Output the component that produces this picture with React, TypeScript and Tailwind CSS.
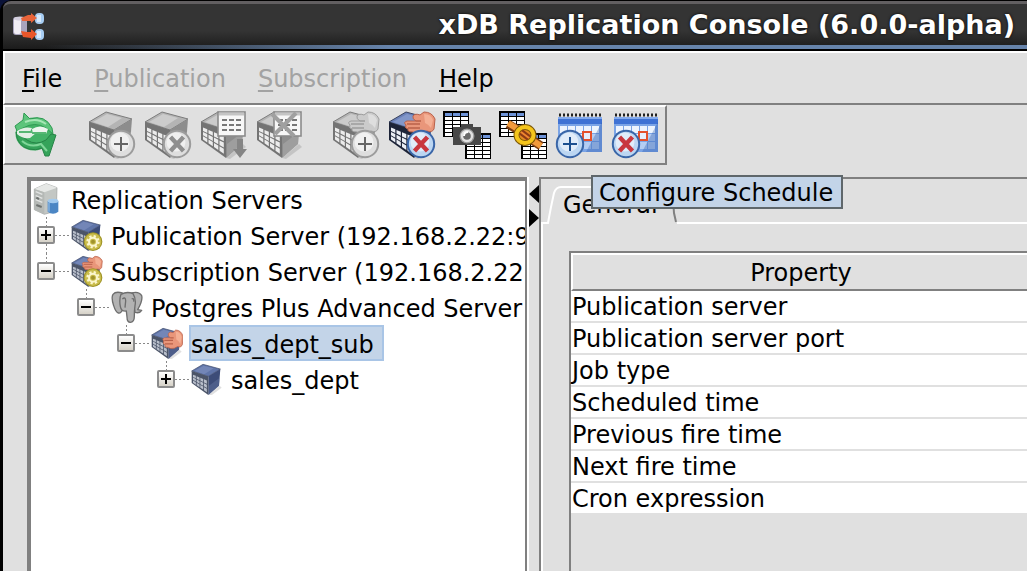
import { Fragment, type ReactNode } from "react";

type Tone = "gray" | "blue" | "slate";

const GRID = [0, 1, 2, 3];

/* A point on the front face of the cube, u to the right and v downward, both 0..1. */
function facePoint(u: number, v: number) {
  const top = 12 + 8 * u;
  const bottom = 30 + 18 * u;
  return `${(1 + 25 * u).toFixed(1)},${(top + (bottom - top) * v).toFixed(1)}`;
}

const cubeColors = {
  gray: { top: "#b4b4b4", hi: "#dcdcdc", front: "#747474", side: "#8d8d8d", low: "#b0b0b0", cell: "#ececec", edge: "#7c7c7c" },
  blue: { top: "#6a80b8", hi: "#93a6d4", front: "#1d2438", side: "#3d4f7d", low: "#6f83ad", cell: "#eceff5", edge: "#39435f" },
  slate: { top: "#5f74a8", hi: "#8093c2", front: "#4b5468", side: "#3c4c78", low: "#5d6f9b", cell: "#b9bfcb", edge: "#3f4a68" },
};

function Cube({ tone }: { tone: Tone }) {
  const c = cubeColors[tone];
  return (
    <g>
      <path d="M26 48 43 34 46 37 30 49Z" fill="#000" opacity=".12" />
      <path d="M1 12 18 2 44 9 26 20Z" fill={c.top} stroke={c.edge} strokeWidth="1" />
      <path d="M5 12 19 4 34 8 20 17Z" fill={c.hi} opacity=".6" />
      <path d="M26 20 44 9 42 34 26 48Z" fill={c.side} />
      <path d="M27 34 43 22 42 34 27 47Z" fill={c.low} opacity=".5" />
      <path d="M1 12 26 20V48L1 30Z" fill={c.front} />
      {GRID.map((col) =>
        GRID.slice(0, 3).map((row) => {
          const u = 0.08 + col * 0.22;
          const v = 0.26 + row * 0.23;
          return (
            <polygon
              key={`${col}-${row}`}
              points={[
                facePoint(u, v),
                facePoint(u + 0.17, v),
                facePoint(u + 0.17, v + 0.18),
                facePoint(u, v + 0.18),
              ].join(" ")}
              fill={c.cell}
            />
          );
        }),
      )}
    </g>
  );
}

function Badge({ cx, cy, tone, kind }: { cx: number; cy: number; tone: Tone; kind: "plus" | "cross" }) {
  const gray = tone === "gray";
  const mark = kind === "plus" ? (gray ? "#666" : "#1c4f8f") : gray ? "#8f8f8f" : "#c8373f";
  return (
    <g transform={`translate(${cx} ${cy})`}>
      <circle r="13.2" fill={gray ? "#dedede" : "#bcd6f2"} stroke={gray ? "#9c9c9c" : "#3a66a8"} strokeWidth="2" />
      <circle cx="-1" cy="-2" r="9.5" fill="#fff" opacity=".55" />
      {kind === "plus" ? (
        <path d="M-7 0H7M0-7V7" stroke={mark} strokeWidth="2" />
      ) : (
        <path d="M-6.5-7 6.5 7M6.5-7-6.5 7" stroke={mark} strokeWidth="4.4" />
      )}
    </g>
  );
}

function Hand({ tone }: { tone: Tone }) {
  const gray = tone === "gray";
  const line = gray ? "#9d9d9d" : "#b9614a";
  return (
    <g>
      <path
        d="M25 6Q27 3 32 5L36 2Q44 2 47 9L46 19Q44 23 39 21L34 23Q27 24 25 22Q19 22 20 19Q16 18 18 15Q15 12 19 11L28 11Q24 9 25 6Z"
        fill={gray ? "#cbcbcb" : "#e9967a"}
        stroke={line}
        strokeWidth="1"
      />
      <path d="M19 14H32M20 18H32M28 11H33" stroke={line} strokeWidth="1.4" fill="none" />
      <path d="M36 4Q43 4 45 10L43 18Q40 14 37 13Z" fill={gray ? "#dedede" : "#f4b095"} />
    </g>
  );
}

function Sheet() {
  return (
    <g>
      <rect x="18" y="2" width="27" height="24" fill="#f7f7f7" stroke="#8b8b8b" strokeWidth="1.6" />
      <path d="M19 4H44" stroke="#c4c4c4" strokeWidth="3" />
      <path d="M22 10H41M22 15H41M22 20H41" stroke="#777" strokeWidth="1.8" strokeDasharray="5 2" />
    </g>
  );
}

function MiniTable({ x, y }: { x: number; y: number }) {
  return (
    <g transform={`translate(${x} ${y})`}>
      <path d="M0 0H26V26H0Z" fill="#000" />
      {[1, 9, 17].map((cx) => (
        <Fragment key={cx}>
          <rect x={cx + 1} y="2" width="7" height="3" fill="#6d93d8" />
          {[6, 10, 14, 18, 22].map((cy) => (
            <rect key={cy} x={cx + 1} y={cy} width="7" height="3" fill="#fff" />
          ))}
        </Fragment>
      ))}
    </g>
  );
}

function Calendar() {
  return (
    <g>
      <rect x="2" y="8" width="44" height="34" fill="#7ba4e6" />
      <rect x="2" y="8" width="44" height="6" fill="#3f72d4" />
      <path d="M2 8H46" stroke="#83abef" strokeWidth="2" />
      <path d="M3 5H46" stroke="#222" strokeWidth="3" strokeDasharray="2 2" />
      {[4, 12, 20, 28, 36].map((x, i) =>
        [16, 24, 32].map((y, j) => (
          <rect key={`${x}-${y}`} x={x} y={y} width="7" height="7" fill={i + j > 4 ? "#b4cdf3" : "#edf4fe"} />
        )),
      )}
      <path d="M46 12V42H30Z" fill="#2d5ca8" opacity=".35" />
      <rect x="27" y="22" width="8" height="8" fill="#e7eefc" stroke="#e4502d" strokeWidth="2" />
    </g>
  );
}

function Gear() {
  return (
    <g>
      <circle cx="33" cy="34" r="14" fill="#9c9123" />
      <circle cx="33" cy="34" r="12.5" fill="#cabd4c" />
      <circle cx="33" cy="34" r="8" fill="none" stroke="#fbf6cd" strokeWidth="4" strokeDasharray="3.2 3.08" />
      <circle cx="33" cy="34" r="6" fill="none" stroke="#fbf6cd" strokeWidth="3" />
      <circle cx="33" cy="34" r="3" fill="#a0932c" />
    </g>
  );
}

function Icon({ className, children }: { className: string; children: ReactNode }) {
  return (
    <svg viewBox="0 0 48 48" className={className} aria-hidden="true">
      {children}
    </svg>
  );
}

function RefreshGlyph() {
  return (
    <g>
      <ellipse cx="22" cy="24" rx="18.5" ry="16.5" fill="#43b267" />
      <path d="M11 10 12 3 18 9Q33 4 40 18L41 24 34 18Q23 11 11 18L5 21 3 16Z" fill="#5cc47b" stroke="#2f9a52" strokeWidth="1" />
      <path d="M4 22Q5 36 17 39Q24 41 30 38L33 46 37 46 44 25 39 24 34 30Q24 36 15 30L7 24Z" fill="#35a35a" stroke="#278447" strokeWidth="1" />
      <path d="M5 21Q12 16 20 18L18 22 24 23 18 28Q10 29 5 24Z" fill="#e2efe5" />
      <path d="M20 19Q28 14 36 19L34 24 21 24Z" fill="#edf6ef" />
      <path d="M7 22H20M20 23H34" stroke="#57b774" strokeWidth="2" />
      <path d="M13 12Q25 7 34 14" stroke="#a6e6b5" strokeWidth="2" fill="none" />
      <path d="M10 31Q18 38 29 34L35 41" stroke="#7fd698" strokeWidth="2" fill="none" />
    </g>
  );
}

function AppGlyph() {
  return (
    <svg viewBox="0 0 32 28" className="h-7 w-8" aria-hidden="true">
      <rect x="0" y="4" width="14" height="18" rx="3" fill="#a9a4bd" />
      <rect x="1" y="5" width="7" height="16" rx="2" fill="#f1edf4" />
      <ellipse cx="7" cy="5.5" rx="6" ry="2" fill="#d4d0df" />
      <rect x="22" y="0" width="9" height="11" rx="4" fill="#a7cdf3" />
      <rect x="22" y="16" width="9" height="11" rx="4" fill="#a7cdf3" />
      <path d="M26 2V9M26 18V25" stroke="#d6e9fc" strokeWidth="4" />
      <path d="M8 5 15 2H18V0L24 5 18 10V8L9 8Z" fill="#e8643a" />
      <path d="M8 18 14 19H18V16L24 21 18 27V25L10 24Z" fill="#e8562a" />
    </svg>
  );
}

function ServerGlyph() {
  return (
    <g>
      <path d="M5 9 23 1 39 7 38 42 20 47 5 40Z" fill="#c3c7c4" stroke="#9b9f9d" strokeWidth="1" />
      <path d="M5 9 23 1 39 7 20 14Z" fill="#e6e8e6" />
      <path d="M5 9 20 14V47L5 40Z" fill="#b5b9b6" />
      <path d="M7 19 17 23M7 25 17 29M7 13 17 17" stroke="#e3e5e4" strokeWidth="2" />
      <path d="M8 33 16 36M8 22 12 24" stroke="#6f7371" strokeWidth="3" />
      <path d="M25 27H41V43Q33 49 25 43Z" fill="#4b86c4" />
      <ellipse cx="33" cy="27" rx="8" ry="3.4" fill="#a2caee" />
      <path d="M27 30V43" stroke="#8cb8e4" strokeWidth="2" />
    </g>
  );
}

function ElephantGlyph() {
  return (
    <g fill="#b3b3b3" stroke="#6e6e6e" strokeWidth="2" strokeLinejoin="round">
      <path d="M31 3Q42 0 46 7Q48 14 40 28L46 29Q43 34 36 32Z" />
      <path d="M17 3Q7 0 3 5Q0 10 4 22Q7 32 11 33Q15 34 18 27Z" />
      <path d="M15 5Q24 0 33 4Q38 12 36 22Q35 29 35 38Q35 47 29 47Q24 47 24 39L23 30Q15 31 14 23Q12 12 15 5Z" />
      <path d="M17 12Q22 8 22 15L21 25M31 12Q35 10 34 16" fill="none" />
    </g>
  );
}

const menus = [
  { name: "File", enabled: true },
  { name: "Publication", enabled: false },
  { name: "Subscription", enabled: false },
  { name: "Help", enabled: true },
];

type Tool = { label: string; art: ReactNode; disabled?: boolean; tip?: boolean };

const toolGroups: Tool[][] = [
  [{ label: "Refresh", art: <RefreshGlyph /> }],
  [
    { label: "Create Publication", disabled: true, art: <><Cube tone="gray" /><Badge cx={33} cy={34} tone="gray" kind="plus" /></> },
    { label: "Remove Publication", disabled: true, art: <><Cube tone="gray" /><Badge cx={33} cy={34} tone="gray" kind="cross" /></> },
    {
      label: "Add Tables",
      disabled: true,
      art: (
        <>
          <Cube tone="gray" />
          <Sheet />
          <path d="M37 29H43V39H47L40 48 33 39H37Z" fill="#858585" />
        </>
      ),
    },
    {
      label: "Remove Tables",
      disabled: true,
      art: (
        <>
          <Cube tone="gray" />
          <Sheet />
          <path d="M16 4 38 26M40 3 19 24" stroke="#a0a0a0" strokeWidth="4" />
        </>
      ),
    },
  ],
  [
    { label: "Create Subscription", disabled: true, art: <><Cube tone="gray" /><Hand tone="gray" /><Badge cx={33} cy={34} tone="gray" kind="plus" /></> },
    { label: "Remove Subscription", art: <><Cube tone="blue" /><Hand tone="blue" /><Badge cx={33} cy={34} tone="blue" kind="cross" /></> },
    {
      label: "Snapshot",
      art: (
        <>
          <MiniTable x={-1} y={1} />
          <MiniTable x={21} y={23} />
          <path d="M9 17H17V14H29V17H37V35H9Z" fill="#484848" />
          <circle cx="23" cy="26" r="7.5" fill="#9a9a9a" />
          <circle cx="23" cy="26" r="5" fill="#6a6a6a" stroke="#e2e2e2" strokeWidth="2.4" />
          <path d="M20 26Q20 22 24 22" stroke="#fff" strokeWidth="2" fill="none" />
        </>
      ),
    },
    {
      label: "Synchronize",
      art: (
        <>
          <MiniTable x={-1} y={1} />
          <MiniTable x={21} y={23} />
          <path d="M8 14 18 20M32 30 41 36" stroke="#7d3d12" strokeWidth="9" />
          <path d="M8 13 19 20M32 30 41 36" stroke="#f29a3c" strokeWidth="6" />
          <ellipse cx="25" cy="25" rx="8.5" ry="8" fill="#e58a22" stroke="#7e5908" strokeWidth="6" />
          <ellipse cx="25" cy="25" rx="8.5" ry="8" fill="none" stroke="#f5c51c" strokeWidth="4" />
          <path d="M21 22 29 28" stroke="#8a3a16" strokeWidth="6" />
          <path d="M21 22 29 28" stroke="#f0862f" strokeWidth="2" />
        </>
      ),
    },
    { label: "Configure Schedule", tip: true, art: <><Calendar /><Badge cx={14} cy={34} tone="blue" kind="plus" /></> },
    { label: "Remove Schedule", art: <><Calendar /><Badge cx={14} cy={34} tone="blue" kind="cross" /></> },
  ],
];

type Node = {
  label: string;
  art: ReactNode;
  open?: boolean;
  selected?: boolean;
  children?: Node[];
};

const tree: Node[] = [
  {
    label: "Publication Server (192.168.2.22:9",
    art: <><Cube tone="slate" /><Gear /></>,
  },
  {
    label: "Subscription Server (192.168.2.22",
    art: <><Cube tone="slate" /><Hand tone="blue" /><Gear /></>,
    open: true,
    children: [
      {
        label: "Postgres Plus Advanced Server",
        art: <ElephantGlyph />,
        open: true,
        children: [
          {
            label: "sales_dept_sub",
            art: <><Cube tone="slate" /><g transform="translate(1 2) scale(1 1.3)"><Hand tone="blue" /></g></>,
            open: true,
            selected: true,
            children: [{ label: "sales_dept", art: <Cube tone="slate" /> }],
          },
        ],
      },
    ],
  },
];

const dotsDown = "bg-[repeating-linear-gradient(to_bottom,#888_0_2px,transparent_2px_4px)]";
const dotsAcross = "bg-[repeating-linear-gradient(to_right,#888_0_2px,transparent_2px_4px)]";

function NodeLabel({ art, label, selected }: { art: ReactNode; label: string; selected?: boolean }) {
  return (
    <>
      <Icon className="size-8 shrink-0">{art}</Icon>
      <span
        className={`ml-1.5 flex h-9 items-center border-2 pt-1 pr-2 ${
          selected ? "border-[#a9c5e6] bg-[#c3d4e8]" : "border-transparent"
        }`}
      >
        {label}
      </span>
    </>
  );
}

function Branch({ nodes }: { nodes: Node[] }) {
  return (
    <ul role="group">
      {nodes.map((node, i) => (
        <li key={node.label} role="treeitem" aria-expanded={!!node.open} aria-selected={!!node.selected}>
          <div className="flex h-9 items-center">
            <div className="ml-1.5 flex h-9 w-[18px] shrink-0 flex-col items-center">
              <span className={`w-px flex-1 ${dotsDown}`} />
              <button
                type="button"
                aria-label={`${node.open ? "Collapse" : "Expand"} ${node.label}`}
                className="flex size-[18px] items-center justify-center rounded-xs border-2 border-[#8c8c8c] bg-linear-to-b from-white to-[#d6d2c8]"
              >
                <svg viewBox="0 0 14 14" className="size-3.5" aria-hidden="true">
                  <path d={node.open ? "M2 7H12" : "M2 7H12M7 2V12"} stroke="#000" strokeWidth="2" />
                </svg>
              </button>
              <span className={`w-px flex-1 ${i < nodes.length - 1 ? dotsDown : ""}`} />
            </div>
            <span className={`h-px w-4 shrink-0 ${dotsAcross}`} />
            <NodeLabel art={node.art} label={node.label} selected={node.selected} />
          </div>
          {node.children && (
            <div className="pl-10">
              <Branch nodes={node.children} />
            </div>
          )}
        </li>
      ))}
    </ul>
  );
}

const properties = [
  "Publication server",
  "Publication server port",
  "Job type",
  "Scheduled time",
  "Previous fire time",
  "Next fire time",
  "Cron expression",
];

export default function App() {
  return (
    <div className="flex min-h-screen flex-col overflow-hidden bg-[#0a1238] font-['DejaVu_Sans',sans-serif] text-2xl leading-7 text-black">
      <header className="flex h-[51px] shrink-0 items-center justify-between rounded-tl-xl border-t border-b-2 border-black bg-black">
        <div className="ml-[3px] flex h-12 flex-1 items-center justify-between rounded-tl-lg border-t-[3px] border-[#625f61] bg-linear-to-b from-[#343434] from-60% to-[#1b1b1b] pl-2.5">
          <AppGlyph />
          <div className="flex h-full flex-1 flex-col">
            <h1 className="flex flex-1 items-center justify-end pr-3 text-[27px] font-bold whitespace-nowrap text-white [text-shadow:0_0_3px_#000]">
              xDB Replication Console (6.0.0-alpha)
            </h1>
            <div className="h-1 bg-linear-to-r from-transparent to-[#6683aa] to-35%" />
          </div>
        </div>
      </header>

      <div className="flex flex-1 flex-col border-l-[3px] border-black bg-[#e0e0e0]">
        <nav aria-label="Main menu" className="flex h-[54px] shrink-0 items-center border-t-2 border-b-2 border-l-2 border-t-white border-b-[#808080] border-l-white pt-0.5 pl-px">
          {menus.map((m) => (
            <button
              key={m.name}
              type="button"
              disabled={!m.enabled}
              className={`px-4 ${m.enabled ? "text-black" : "text-[#a3a3a3]"}`}
            >
              <span className="underline decoration-2 underline-offset-3">{m.name[0]}</span>
              {m.name.slice(1)}
            </button>
          ))}
        </nav>

        <div role="toolbar" aria-label="Tools" className="flex w-fit gap-7 border-2 border-t-white border-r-[#808080] border-b-[#808080] border-l-white pt-[3px] pr-[5px] pb-[5px] pl-[7px]">
          {toolGroups.map((group, g) => (
            <div key={g} className="flex gap-2">
              {group.map((tool) => (
                <div key={tool.label} className="relative">
                  <button type="button" aria-label={tool.label} disabled={tool.disabled} className="block size-12">
                    <Icon className="size-12 overflow-visible">{tool.art}</Icon>
                  </button>
                  {tool.tip && (
                    <div role="tooltip" className="absolute top-[65px] left-[35px] z-10 border-2 border-[#5f676b] bg-[#c3d4e8] pt-0.5 pr-2 pl-1.5 whitespace-nowrap">
                      {tool.label}
                    </div>
                  )}
                </div>
              ))}
            </div>
          ))}
        </div>

        <main className="flex flex-1 pt-3 pl-6">
          <section
            aria-label="Replication tree"
            className="w-[500px] shrink-0 overflow-hidden border-t-4 border-r-2 border-l-4 border-[#808080] bg-white whitespace-nowrap"
          >
            <div className="flex h-9 items-center">
              <Icon className="size-8 shrink-0">
                <ServerGlyph />
              </Icon>
              <span className="ml-2 pt-1">Replication Servers</span>
            </div>
            <Branch nodes={tree} />
          </section>

          <div className="flex w-3 shrink-0 flex-col gap-1.5 border-l-2 border-white pt-2">
            <button type="button" aria-label="Collapse left pane">
              <svg viewBox="0 0 10 18" className="h-[18px] w-2.5" aria-hidden="true">
                <path d="M10 0V18L0 9Z" />
              </svg>
            </button>
            <button type="button" aria-label="Expand left pane">
              <svg viewBox="0 0 10 18" className="h-[18px] w-2.5" aria-hidden="true">
                <path d="M0 0V18L10 9Z" />
              </svg>
            </button>
          </div>

          <section className="flex min-w-0 flex-1 flex-col border-t-2 border-l-2 border-[#808080]">
            <div role="tablist" className="flex h-[45px] shrink-0 items-end">
              <button type="button" role="tab" aria-selected="true" className="relative h-[45px] w-[136px] pt-1.5 pl-[22px] text-left">
                <svg viewBox="0 0 136 45" className="absolute inset-0 h-full w-full" fill="none" aria-hidden="true">
                  <path d="M0 44H7L10 28 13 14Q15 8 20 8H126" stroke="#fff" strokeWidth="2" />
                  <path d="M128 9Q132 12 132 20L133 34 135 43" stroke="#808080" strokeWidth="2" />
                </svg>
                General
              </button>
              <div className="h-0.5 flex-1 bg-white" />
            </div>
            <div role="tabpanel" className="flex flex-1 flex-col border-l-2 border-white pt-[27px] pl-[26px]">
              <div className="flex-1 border-t-2 border-l-2 border-[#808080]">
                <table className="w-full border-separate border-spacing-0 text-left">
                  <thead>
                    <tr>
                      <th className="h-[38px] border-t-2 border-b-2 border-l-2 border-t-white border-b-[#808080] border-l-white p-0 pt-0.5 pl-0.5 text-center font-normal">
                        Property
                      </th>
                    </tr>
                  </thead>
                  <tbody>
                    {properties.map((p) => (
                      <tr key={p}>
                        <td className="h-8 border-b-2 border-[#e0e0e0] bg-white p-0 pt-0.5 pl-px">{p}</td>
                      </tr>
                    ))}
                  </tbody>
                </table>
              </div>
            </div>
          </section>
        </main>
      </div>
    </div>
  );
}
